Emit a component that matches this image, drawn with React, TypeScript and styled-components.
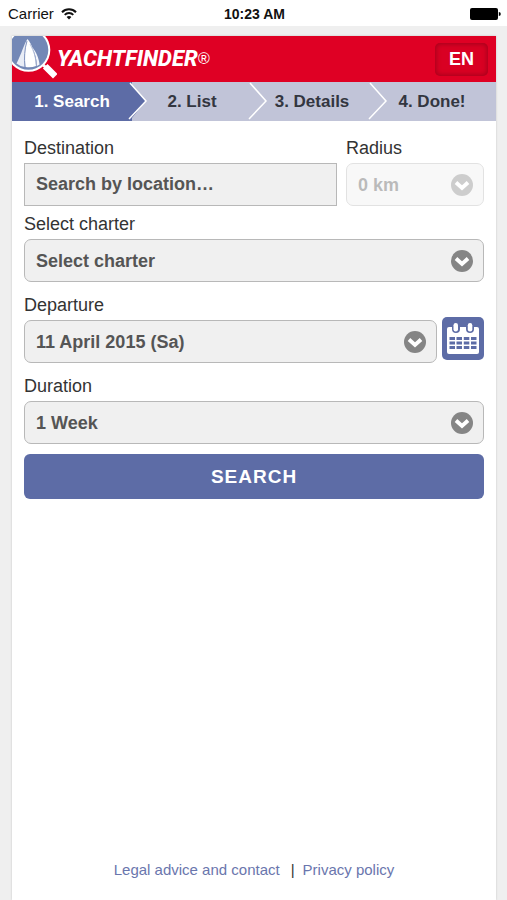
import React from "react";
import styled, { createGlobalStyle } from "styled-components";

const blue = "#5d6ca6";
const red = "#df0024";

const GlobalStyle = createGlobalStyle`
  *, *::before, *::after { box-sizing: border-box; }
  body {
    margin: 0;
    background: #efefef;
    color: #333;
    font-family: "Liberation Sans", Arial, Helvetica, sans-serif;
  }
  button, input, select { font-family: inherit; }
`;

const Page = styled.div`
  display: flex;
  flex-direction: column;
  min-height: 100vh;
`;

const StatusBar = styled.div`
  display: grid;
  grid-template-columns: 1fr auto 1fr;
  align-items: center;
  height: 26px;
  padding: 2px 6px 0 8px;
  background: #fff;
  color: #111;
  font-size: 15px;
  line-height: 20px;
`;

const Carrier = styled.div`
  display: flex;
  align-items: center;
  gap: 7px;
`;

const Clock = styled.time`
  font-weight: bold;
  font-size: 14px;
`;

const Battery = styled.svg`
  justify-self: end;
`;

const Card = styled.main`
  display: flex;
  flex: 1;
  flex-direction: column;
  margin: 10px 11px 0 12px;
  background: #fff;
  box-shadow: 0 0 2px #c4c4c4;
`;

const Header = styled.header`
  display: flex;
  align-items: center;
  justify-content: space-between;
  height: 46px;
  padding-right: 8px;
  background: ${red};
`;

const Brand = styled.div`
  display: flex;
  align-items: center;
  color: #fff;
`;

const BrandName = styled.span`
  font-family: Roboto, "Liberation Sans", sans-serif;
  font-size: 22px;
  line-height: 28px;
  font-weight: 800;
  font-style: italic;
`;

const Registered = styled.span`
  font-size: 16px;
  line-height: 20px;
  font-style: italic;
`;

const LanguageButton = styled.button`
  width: 53px;
  height: 33px;
  padding: 0;
  border: 0;
  border-radius: 5px;
  background: #d90023;
  box-shadow: inset 0 0 5px 1px #a3001b;
  color: #fff;
  font-size: 18px;
  font-weight: bold;
`;

const Steps = styled.nav`
  display: grid;
  grid-template-columns: 120fr 120fr 120fr 124fr;
  height: 39px;
  background: #c1c4d8;
`;

const Step = styled.a<{ $active?: boolean }>`
  position: relative;
  display: flex;
  align-items: center;
  justify-content: center;
  background: ${(p) => (p.$active ? blue : "transparent")};
  color: ${(p) => (p.$active ? "#fff" : "#333640")};
  font-size: 17px;
  font-weight: bold;
  text-decoration: none;

  &:last-child { padding-right: 4px; }
`;

const StepArrow = styled.svg`
  position: absolute;
  z-index: 1;
  top: 0;
  right: -16px;
`;

const Form = styled.form`
  display: flex;
  flex-direction: column;
  padding: 16px 12px 0;
`;

const Row = styled.div<{ $gap: number }>`
  display: flex;
  align-items: flex-end;
  gap: ${(p) => p.$gap}px;
`;

const Field = styled.div<{ $width?: number; $space?: number }>`
  flex: ${(p) => (p.$width ? `0 0 ${p.$width}px` : "1 1 0")};
  min-width: 0;
  margin-top: ${(p) => p.$space ?? 0}px;
`;

const Label = styled.label`
  display: block;
  margin-bottom: 4px;
  font-size: 18px;
  line-height: 22px;
`;

const TextInput = styled.input`
  display: block;
  width: 100%;
  height: 43px;
  padding: 0 11px;
  border: 1px solid #b8b8b8;
  border-radius: 0;
  background: #f0f0f0;
  color: #555;
  font-size: 18px;
  font-weight: bold;

  &::placeholder { color: #555; opacity: 1; }
`;

const SelectBox = styled.div<{ $disabled?: boolean }>`
  display: grid;
  align-items: center;
  opacity: ${(p) => (p.$disabled ? 0.4 : 1)};

  > * { grid-area: 1 / 1; }
`;

const Select = styled.select`
  width: 100%;
  height: 43px;
  padding: 0 44px 0 11px;
  border: 1px solid #b8b8b8;
  border-radius: 7px;
  appearance: none;
  background: #f0f0f0;
  color: #555;
  font-size: 18px;
  font-weight: bold;

  &:disabled { color: #555; opacity: 1; }
`;

const SelectIcon = styled.svg`
  justify-self: end;
  margin-right: 11px;
  pointer-events: none;
`;

const CalendarButton = styled.button`
  flex: none;
  width: 42px;
  height: 43px;
  margin-bottom: 3px;
  padding: 0;
  border: 0;
  border-radius: 5px;
  background: ${blue};

  svg { display: block; }
`;

const SearchButton = styled.button`
  height: 45px;
  margin-top: 10px;
  border: 0;
  border-radius: 6px;
  background: ${blue};
  color: #fff;
  font-size: 19px;
  font-weight: bold;
  letter-spacing: 1px;
`;

const Footer = styled.footer`
  display: flex;
  justify-content: center;
  gap: 8px;
  margin-top: auto;
  padding-bottom: 20px;
  font-size: 15px;
  line-height: 20px;
`;

const FooterLink = styled.a`
  color: #6a76ad;
  text-decoration: none;
`;

const Divider = styled.span`
  margin-left: 3px;
`;

function WifiIcon() {
  return (
    <svg width="16" height="12" viewBox="0 0 16 12" fill="none" stroke="#111" aria-hidden="true">
      <path d="M1 4.2C4.8.2 11.2.2 15 4.2" strokeWidth="2" />
      <path d="M3.7 6.8c2.3-2.4 6.3-2.4 8.6 0" strokeWidth="1.9" />
      <path d="M8 11.4 5.6 9c1.3-1.3 3.5-1.3 4.8 0Z" fill="#111" stroke="none" />
    </svg>
  );
}

function LogoMark() {
  return (
    <svg width="45" height="46" viewBox="0 0 45 46" aria-hidden="true">
      <path d="m30 28 5 4.5" stroke="#fff" strokeWidth="3" />
      <path d="m35.5 32.5 5.5 5.5" stroke="#fff" strokeWidth="6.5" strokeLinecap="square" />
      <circle cx="16.5" cy="14" r="21.8" fill="#fff" />
      <circle cx="16.5" cy="14" r="19.8" fill="#7388b6" />
      <path d="M15.500 3C12 8 9.500 18 4.500 27.500q3.500 3 8.500 3.500C13 22 13.200 12 15.500 3Z" fill="#e9edf6" />
      <path d="M15.500 3C20 8 23.500 19 24 30q-5 2-10.500 1C12.500 21 13 11 15.500 3Z" fill="#fff" />
      <path d="M20 11c4 4.500 6.800 11 7.600 17.500L25 30C24.800 23 23 17 20 11Z" fill="#f4f6fb" />
      <path d="M15 5C12.500 13 12 22 12.800 31" fill="none" stroke="#8496c0" strokeWidth="1" />
      <path d="M18 8c4 7 6 14 6.400 22" fill="none" stroke="#a9b6d4" strokeWidth="0.8" />
    </svg>
  );
}

function ArrowShape({ active }: { active?: boolean }) {
  return (
    <StepArrow width="20" height="39" viewBox="0 0 20 39" aria-hidden="true">
      <path d="M0 0h3L18 19 2 39H0Z" fill={active ? blue : "#c1c4d8"} />
      {active && <path d="M4 0h16v39H4v-3l14-17L4 3Z" fill="#c1c4d8" />}
      <path d="M2 1 18 19 1 37" fill="none" stroke="#fff" strokeWidth="1.5" />
    </StepArrow>
  );
}

function Chevron() {
  return (
    <SelectIcon width="22" height="22" viewBox="0 0 22 22" aria-hidden="true">
      <circle cx="11" cy="11" r="11" fill="#858585" />
      <path d="m5 8.500 6 5.500 6-5.500" fill="none" stroke="#fff" strokeWidth="3.8" />
    </SelectIcon>
  );
}

function CalendarIcon() {
  return (
    <svg width="42" height="43" viewBox="0 0 42 43" aria-hidden="true">
      <path d="M5 12q0-2 2-2h28q2 0 2 2v23q0 2-2 2H7q-2 0-2-2Z" fill="#fff" />
      <rect x="10" y="4" width="8" height="12" rx="4" fill={blue} />
      <rect x="24" y="4" width="8" height="12" rx="4" fill={blue} />
      <rect x="11.5" y="6" width="4.5" height="8.5" rx="2.2" fill="#fff" />
      <rect x="25.8" y="6" width="4.5" height="8.5" rx="2.2" fill="#fff" />
      {[20, 24.5, 29].map((y) =>
        [7.5, 14.5, 21.8, 29].map((x) => (
          <rect key={`${x}-${y}`} x={x} y={y} width="5.5" height="3" fill={blue} />
        )),
      )}
    </svg>
  );
}

type SelectFieldProps = {
  id: string;
  label: string;
  value: string;
  width?: number;
  space?: number;
  disabled?: boolean;
};

function SelectField({ id, label, value, width, space, disabled }: SelectFieldProps) {
  return (
    <Field $width={width} $space={space}>
      <Label htmlFor={id}>{label}</Label>
      <SelectBox $disabled={disabled}>
        <Select id={id} disabled={disabled}>
          <option>{value}</option>
        </Select>
        <Chevron />
      </SelectBox>
    </Field>
  );
}

const steps = ["1. Search", "2. List", "3. Details", "4. Done!"];

export default function App() {
  return (
    <Page>
      <GlobalStyle />
      <StatusBar>
        <Carrier>
          Carrier
          <WifiIcon />
        </Carrier>
        <Clock>10:23 AM</Clock>
        <Battery width="31" height="12" viewBox="0 0 31 12" aria-hidden="true">
          <rect width="28" height="12" rx="2" fill="#000" />
          <path d="M28.800 4q2 0 2 2t-2 2Z" fill="#000" />
        </Battery>
      </StatusBar>
      <Card>
        <Header>
          <Brand>
            <LogoMark />
            <BrandName>YACHTFINDER</BrandName>
            <Registered>®</Registered>
          </Brand>
          <LanguageButton type="button">EN</LanguageButton>
        </Header>
        <Steps>
          {steps.map((step, i) => (
            <Step key={step} href="#" $active={i === 0}>
              {step}
              {i < steps.length - 1 && <ArrowShape active={i === 0} />}
            </Step>
          ))}
        </Steps>
        <Form>
          <Row $gap={9}>
            <Field>
              <Label htmlFor="destination">Destination</Label>
              <TextInput id="destination" type="text" placeholder="Search by location…" />
            </Field>
            <SelectField id="radius" label="Radius" value="0 km" width={138} disabled />
          </Row>
          <SelectField id="charter" label="Select charter" value="Select charter" space={7} />
          <Row $gap={5}>
            <SelectField id="departure" label="Departure" value="11 April 2015 (Sa)" space={12} />
            <CalendarButton type="button" aria-label="Open calendar">
              <CalendarIcon />
            </CalendarButton>
          </Row>
          <SelectField id="duration" label="Duration" value="1 Week" space={12} />
          <SearchButton type="submit">SEARCH</SearchButton>
        </Form>
        <Footer>
          <FooterLink href="#">Legal advice and contact</FooterLink>
          <Divider>|</Divider>
          <FooterLink href="#">Privacy policy</FooterLink>
        </Footer>
      </Card>
    </Page>
  );
}
